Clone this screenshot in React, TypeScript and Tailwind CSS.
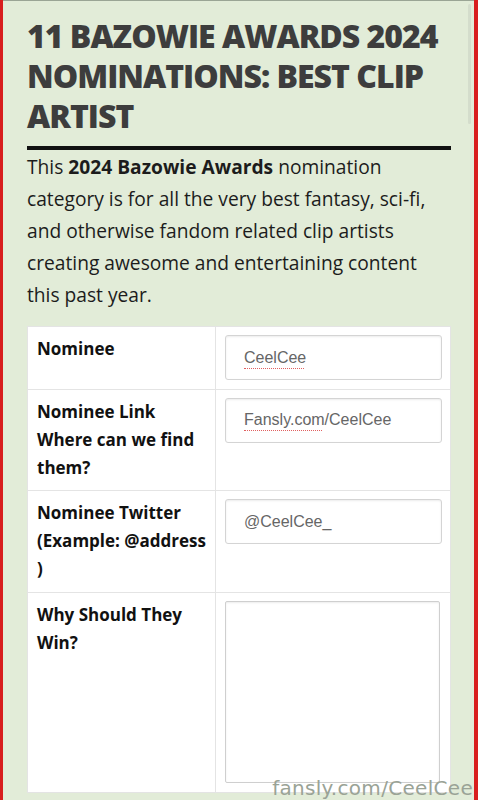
import React from "react";

const inputCls =
  "w-full h-[45px] border border-[#d4d4d4] rounded-[3px] bg-white px-[18px] text-[16px] text-[#666] shadow-[inset_0_1px_2px_rgba(0,0,0,0.08)] flex items-center";

function Field({ value, underline }: { value: string; underline?: number }) {
  return (
    <div className={inputCls} style={{ fontFamily: "'Liberation Sans', Arial, sans-serif" }}>
      <span className="relative">
        {value}
        {underline ? (
          <span
            className="absolute left-0 bottom-[1px] border-b border-dotted border-[#e06060]"
            style={{ width: underline }}
          />
        ) : null}
      </span>
    </div>
  );
}

export default function App() {
  const rows = [
    { label: ["Nominee"], h: "h-[63px]", field: <Field value="CeelCee" underline={60} /> },
    {
      label: ["Nominee Link", "Where can we find", "them?"],
      h: "h-[102px]",
      field: <Field value="Fansly.com/CeelCee" underline={78} />,
    },
    {
      label: ["Nominee Twitter", "(Example: @address", ")"],
      h: "h-[102px]",
      field: <Field value="@CeelCee_" />,
    },
  ];
  return (
    <div
      className="w-[478px] h-[800px] overflow-hidden bg-[#e2ecd8] border-l-[3px] border-r-[4px] border-[#d81e1e] relative"
      style={{ fontFamily: "'Open Sans', sans-serif" }}
    >
      <div className="h-[1px] bg-[#9aa595]" />
      <div className="pl-[24px] pr-[23px] pt-[15px]">
        <h1 className="text-[32px] leading-[40px] font-extrabold text-[#3d3d3d] tracking-[-1px] whitespace-nowrap">
          11 BAZOWIE AWARDS 2024
          <br />
          NOMINATIONS: BEST CLIP
          <br />
          ARTIST
        </h1>
        <div className="h-[4px] bg-[#111] mt-[10px]" />
        <p className="text-[19.2px] leading-[32px] text-[#1c1c1c] mt-[1px] pr-[6px]">
          This <b className="font-bold">2024 Bazowie Awards</b> nomination category is for all the very best fantasy,
          sci-fi, and otherwise fandom related clip artists creating awesome and entertaining content this past
          year.
        </p>
        <div className="mt-[15px] bg-white border border-[#e4e4e4] h-[467px] flex flex-col">
          {rows.map((r, i) => (
            <div key={i} className={`flex ${r.h} border-b border-[#e4e4e4]`}>
              <div className="w-[188px] border-r border-[#e4e4e4] pl-[9px] pt-[8px] text-[17px] leading-[28px] font-bold text-[#111]">
                {r.label.map((l, j) => (
                  <div key={j}>{l}</div>
                ))}
              </div>
              <div className="flex-1 pl-[9px] pr-[8px] pt-[8px]">{r.field}</div>
            </div>
          ))}
          <div className="flex flex-1">
            <div className="w-[188px] border-r border-[#e4e4e4] pl-[9px] pt-[8px] text-[17px] leading-[28px] font-bold text-[#111]">
              <div>Why Should They</div>
              <div>Win?</div>
            </div>
            <div className="flex-1 pl-[9px] pr-[10px] pt-[8px] pb-[9px]">
              <div className="w-full h-[182px] border border-[#cfcfcf] rounded-[2px] bg-white shadow-[inset_0_1px_2px_rgba(0,0,0,0.08)]" />
            </div>
          </div>
        </div>
      </div>
      <div className="absolute right-[1px] bottom-[-3px] text-[20px] text-[#9aa396] tracking-[0.3px]" style={{ fontFamily: "'DejaVu Sans', sans-serif" }}>
        fansly.com/CeelCee
      </div>
      <div className="absolute right-[3px] top-[4px] w-[3px] h-[120px] bg-[#d4ddcc] rounded" />
    </div>
  );
}
